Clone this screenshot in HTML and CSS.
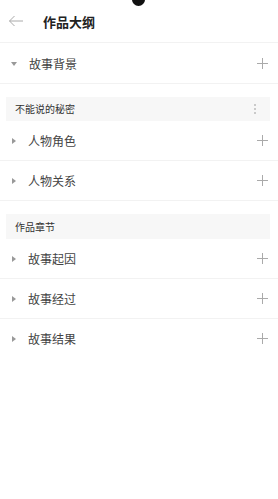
FILE: index.html
```html
<!DOCTYPE html>
<html lang="zh">
<head>
<meta charset="utf-8">
<link rel="stylesheet" href="styles.css">
</head>
<body>
<div class="notch"></div>
<header class="header">
  <svg class="back" width="16" height="12" viewBox="0 0 16 12"><path d="M15 6H1.5M6.5 1L1.5 6l5 5" fill="none" stroke="#aaa" stroke-width="1"/></svg>
  <h1 class="title">作品大纲</h1>
</header>
<main>
  <div class="row first">
    <span class="tri down"></span><span class="label">故事背景</span>
    <span class="plus"></span>
  </div>
  <div class="section">
    <span class="section-title">不能说的秘密</span>
    <span class="kebab"><i></i><i></i><i></i></span>
  </div>
  <div class="row"><span class="tri"></span><span class="label">人物角色</span><span class="plus"></span></div>
  <div class="row"><span class="tri"></span><span class="label">人物关系</span><span class="plus"></span></div>
  <div class="section tall">
    <span class="section-title">作品章节</span>
  </div>
  <div class="row"><span class="tri"></span><span class="label">故事起因</span><span class="plus"></span></div>
  <div class="row"><span class="tri"></span><span class="label">故事经过</span><span class="plus"></span></div>
  <div class="row last"><span class="tri"></span><span class="label">故事结果</span><span class="plus"></span></div>
</main>
</body>
</html>
```
FILE: styles.css
```css
html, body { margin: 0; padding: 0; background: #fff; }
body { font-family: "Noto Sans CJK SC", "Noto Sans", sans-serif; color: #333; width: 278px; height: 499px; overflow: hidden; position: relative; }
.notch { position: absolute; left: 132px; top: -7px; width: 13px; height: 13px; border-radius: 50%; background: #111; }
.header { height: 42px; display: flex; align-items: center; border-bottom: 1px solid #f2f2f2; }
.back { margin-left: 8px; width: 16px; height: 12px; }
.title { margin: 0 0 0 19px; font-size: 13px; font-weight: bold; color: #222; line-height: 1; }
.row { height: 39px; display: flex; align-items: center; border-bottom: 1px solid #f2f2f2; padding: 0 10px 0 11px; }
.row.first { height: 40px; padding-top: 1px; box-sizing: border-box; height: 41px; }
.row.last { border-bottom: none; }
.tri { width: 0; height: 0; border-top: 3px solid transparent; border-bottom: 3px solid transparent; border-left: 4px solid #999; margin-left: 1px; }
.tri.down { border-left: 3px solid transparent; border-right: 3px solid transparent; border-top: 4px solid #999; border-bottom: 0; margin-left: 0; }
.label { margin-left: 12px; font-size: 12px; color: #444; flex: 1; line-height: 1; }
.plus { width: 11px; height: 11px; position: relative; }
.plus::before, .plus::after { content: ""; position: absolute; background: #aaa; }
.plus::before { left: 0; right: 0; top: 5px; height: 1px; }
.plus::after { top: 0; bottom: 0; left: 5px; width: 1px; }
.section { margin: 13px 8px 0 6px; height: 24px; background: #f7f7f7; display: flex; align-items: center; padding: 0 14px 0 9px; }
.section.tall { height: 25px; }
.section-title { font-size: 10px; color: #333; flex: 1; line-height: 1; }
.kebab { display: flex; flex-direction: column; gap: 2px; }
.kebab i { display: block; width: 2px; height: 2px; border-radius: 50%; background: #bbb; }
```
